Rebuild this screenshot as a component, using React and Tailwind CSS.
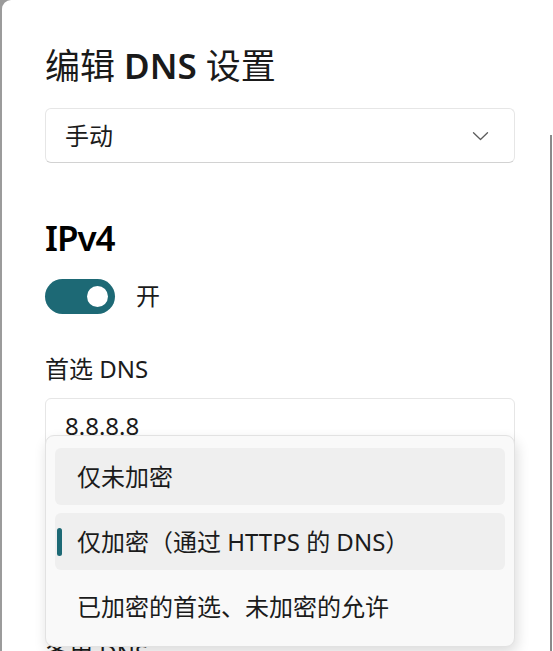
import React from 'react';

const font = "font-['Noto_Sans','Noto_Sans_CJK_SC',sans-serif]";

function Chevron() {
  return (
    <svg width="17" height="10" viewBox="0 0 17 10" fill="none">
      <path d="M1.5 1.8 L8.5 8.5 L15.5 1.8" stroke="#5c5c5c" strokeWidth="1.3" strokeLinecap="round" strokeLinejoin="round" />
    </svg>
  );
}

function Toggle() {
  return (
    <div className="w-[70px] h-[35px] rounded-full bg-[#1d6975] flex items-center justify-end pr-[7px]">
      <div className="w-[21px] h-[21px] rounded-full bg-white" />
    </div>
  );
}

const options = [
  { label: '仅未加密', hover: true },
  { label: '仅加密（通过 HTTPS 的 DNS）', hover: true, selected: true },
  { label: '已加密的首选、未加密的允许' },
];

export default function App() {
  return (
    <div className={`relative w-[553px] h-[651px] overflow-hidden bg-[#9b9b9b] ${font}`}>
      {/* dialog */}
      <div className="ml-[2px] h-full bg-white rounded-tl-[9px] pl-[43px] pr-[38px] pt-[44px] text-[#1b1b1b]">
        <h1 className="text-[35px] leading-[44px] font-normal text-[#1a1a1a]">
          编辑 <span className="font-semibold">DNS</span> 设置
        </h1>

        <div className="mt-[20px] h-[55px] rounded-[6px] border border-[#e6e6e6] border-b-[#d2d2d2] flex items-center justify-between pl-[19px] pr-[25px]">
          <span className="text-[24px]">手动</span>
          <Chevron />
        </div>

        <h2 className="mt-[55px] text-[35px] leading-[40px] tracking-[-1px] font-semibold text-black">IPv4</h2>

        <div className="mt-[20px] flex items-center gap-[21px]">
          <Toggle />
          <span className="text-[24px]">开</span>
        </div>

        <div className="mt-[40px] text-[24px] leading-[30px]">首选 DNS</div>

        <div className="mt-[14px] h-[55px] rounded-[6px] border border-[#e6e6e6] flex items-center pl-[19px]">
          <span className="text-[24px]">8.8.8.8</span>
        </div>

        <div className="mt-[20px] text-[24px] leading-[30px]">首选 DNS 加密</div>
        <div className="mt-[12px] h-[55px] rounded-[6px] border border-[#e6e6e6] flex items-center pl-[19px]">
          <span className="text-[24px]">仅加密（通过 HTTPS 的 DNS）</span>
        </div>
        <div className="mt-[68px] text-[24px] leading-[30px]">备用 DNS</div>
      </div>

      {/* scrollbar */}
      <div className="absolute right-[1px] top-[135px] bottom-0 w-[2px] bg-[#8a8a8a]" />

      {/* dropdown menu */}
      <div className="absolute left-[45px] top-[435px] w-[470px] h-[212px] rounded-[9px] bg-[#f9f9f9] border border-[#e2e2e2] shadow-[2px_6px_14px_rgba(0,0,0,0.14)] px-[9px] pt-[12px] flex flex-col gap-[8px]">
        {options.map((o) => (
          <div
            key={o.label}
            className={`relative h-[57px] rounded-[6px] flex items-center pl-[22px] text-[24px] text-[#1b1b1b] ${o.hover ? 'bg-[#efefef]' : ''}`}
          >
            {o.selected && (
              <div className="absolute left-[2px] top-[15px] w-[5px] h-[28px] rounded-full bg-[#1d6975]" />
            )}
            {o.label}
          </div>
        ))}
      </div>
    </div>
  );
}
